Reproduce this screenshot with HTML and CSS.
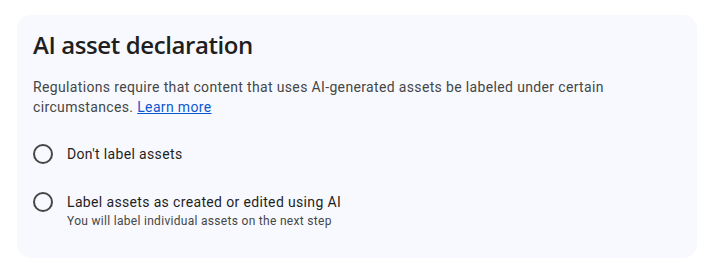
FILE: index.html
```html
<!DOCTYPE html>
<html lang="en">
<head>
    <meta charset="UTF-8">
    <meta name="viewport" content="width=device-width, initial-scale=1.0">
    <title>AI asset declaration</title>
    <link rel="stylesheet" href="styles.css">
</head>
<body>
    <main>
        <section class="card">
            <h1 class="card-title">AI asset declaration</h1>
            <p class="card-text">Regulations require that content that uses AI-generated assets be labeled under certain circumstances. <a href="#" class="link">Learn more</a></p>
            <div class="options">
                <label class="option">
                    <input type="radio" name="ai-label" class="radio">
                    <span class="option-text">
                        <span class="option-label">Don't label assets</span>
                    </span>
                </label>
                <label class="option">
                    <input type="radio" name="ai-label" class="radio">
                    <span class="option-text">
                        <span class="option-label">Label assets as created or edited using AI</span>
                        <span class="option-hint">You will label individual assets on the next step</span>
                    </span>
                </label>
            </div>
        </section>
    </main>
</body>
</html>
```

FILE: styles.css
```css
*, ::before, ::after {
    margin: 0;
    padding: 0;
    box-sizing: border-box;
}

body {
    background-color: #fff;
    font-family: Roboto, "Liberation Sans", sans-serif;
    color: #444746;
}

main {
    padding: 15px 13px 18px 17px;
}

.card {
    background-color: #f8f9fe;
    border-radius: 14px;
    height: 243px;
    padding: 14px 16px;
}

.card-title {
    font-family: "Open Sans", Roboto, sans-serif;
    font-size: 24px;
    line-height: 32px;
    font-weight: 600;
    letter-spacing: -0.4px;
    color: #1f1f1f;
}

.card-text {
    margin-top: 16px;
    font-size: 14px;
    line-height: 20px;
    letter-spacing: 0.35px;
    max-width: 610px;
}

.link {
    color: #0b57d0;
}

.options {
    margin-top: 13px;
    display: flex;
    flex-direction: column;
}

.option {
    display: flex;
    align-items: flex-start;
    gap: 14px;
    min-height: 48px;
    padding-top: 14px;
    cursor: pointer;
}

.radio {
    appearance: none;
    width: 20px;
    height: 20px;
    border: 2px solid #444746;
    border-radius: 50%;
    flex-shrink: 0;
}

.option-text {
    display: flex;
    flex-direction: column;
}

.option-label {
    font-size: 14px;
    line-height: 20px;
    letter-spacing: 0.35px;
    color: #1f1f1f;
}

.option-hint {
    font-size: 12px;
    line-height: 18px;
    letter-spacing: 0.3px;
}
```
